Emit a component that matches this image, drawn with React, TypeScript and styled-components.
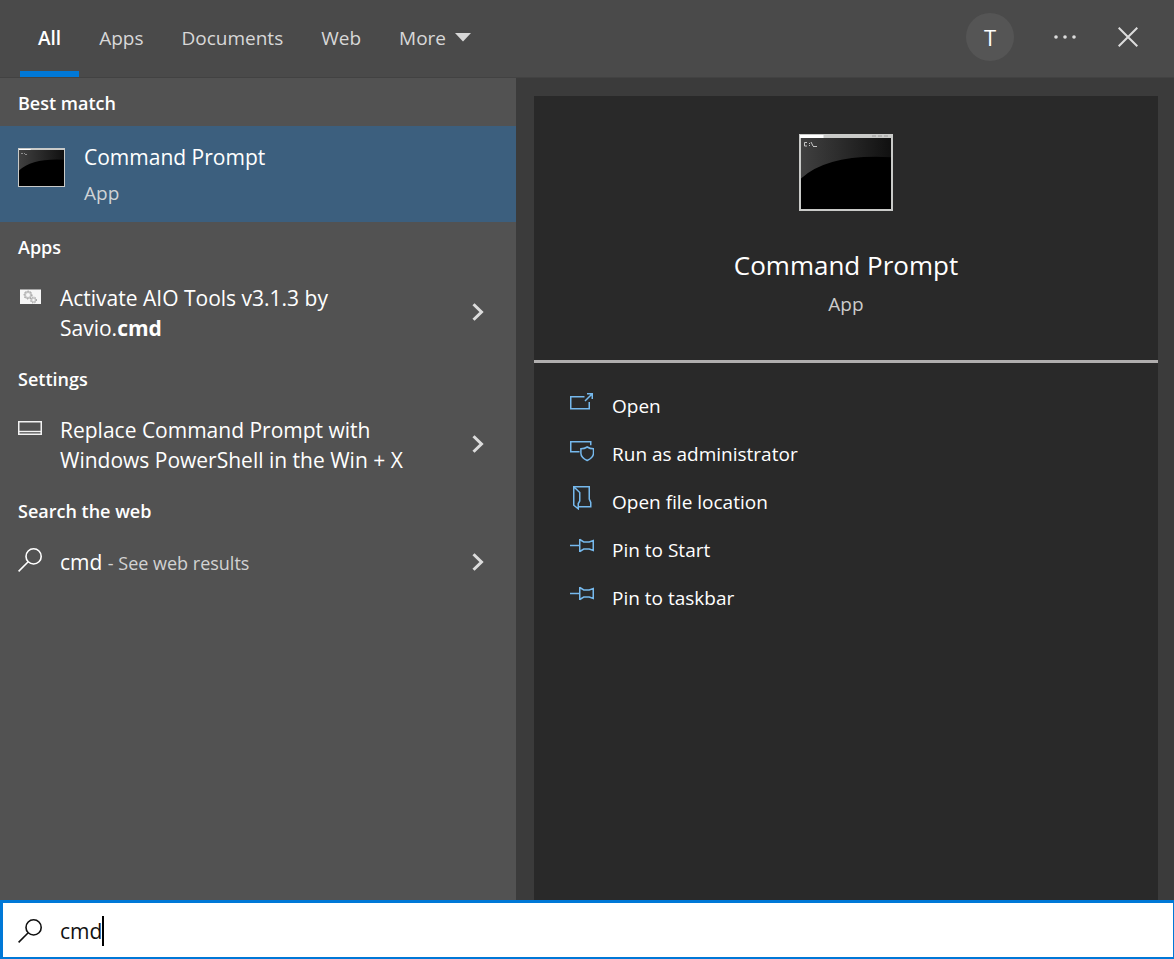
import React, { useState } from "react";
import styled, { createGlobalStyle } from "styled-components";

const GlobalStyle = createGlobalStyle`
  *, *::before, *::after { box-sizing: border-box; }
  body {
    margin: 0;
    background: #3b3b3b;
    color: #ffffff;
    font-family: "Open Sans", "Noto Sans", sans-serif;
  }
  button, input { font: inherit; color: inherit; }
  button { border: 0; background: none; padding: 0; text-align: left; cursor: pointer; }
  h2, h3, p, ul { margin: 0; padding: 0; font-weight: 400; }
  ul { list-style: none; }
  svg { display: block; flex: none; }
`;

const Window = styled.div`
  display: flex;
  flex-direction: column;
  min-height: 100vh;
`;

const Header = styled.header`
  display: flex;
  justify-content: space-between;
  height: 78px;
  padding: 0 24px 0 20px;
  background: #4a4a4a;
  border-bottom: 1px solid #424242;
`;

const Tabs = styled.nav`
  display: flex;
  gap: 2px;
`;

const Tab = styled.button<{ $active?: boolean }>`
  display: flex;
  align-items: center;
  gap: 9px;
  padding: 4px 18px 0;
  border-bottom: 6px solid ${(p) => (p.$active ? "#0078d7" : "transparent")};
  color: ${(p) => (p.$active ? "#ffffff" : "#d8d8d8")};
  font-size: 19px;
  font-weight: ${(p) => (p.$active ? 600 : 400)};
`;

const HeaderActions = styled.div`
  display: flex;
  align-items: center;
  padding-bottom: 3px;
  gap: 19px;
`;

const Avatar = styled.button`
  width: 48px;
  height: 48px;
  margin-right: 10px;
  border-radius: 50%;
  background: #555555;
  font-size: 22px;
  text-align: center;
`;

const IconButton = styled.button`
  display: grid;
  place-items: center;
  width: 44px;
  height: 44px;
  color: #dcdcdc;
`;

const Body = styled.main`
  display: flex;
  flex: 1;
`;

const Results = styled.section`
  flex: 0 1 516px;
  background: #525252;
`;

const GroupTitle = styled.h3`
  padding: 12px 18px 10px;
  font-size: 18px;
  line-height: 26px;
  font-weight: 600;
`;

const BestMatch = styled.button`
  display: flex;
  gap: 19px;
  width: 100%;
  height: 96px;
  padding: 16px 18px;
  background: #3c5f7e;
`;

const BestIcon = styled.span`
  padding-top: 6px;
`;

const BestName = styled.span`
  display: block;
  font-size: 21px;
  line-height: 30px;
`;

const Kind = styled.span`
  display: block;
  padding-top: 8px;
  color: #cfd3d6;
  font-size: 19px;
  line-height: 26px;
`;

const ResultRow = styled.button`
  display: flex;
  align-items: center;
  gap: 18px;
  width: 100%;
  padding: 13px 32px 11px 18px;
`;

const ResultIcon = styled.span`
  display: flex;
  justify-content: center;
  align-items: center;
  align-self: flex-start;
  width: 24px;
  height: 26px;
`;

const ResultText = styled.span`
  flex: 1;
  max-width: 370px;
  margin-right: auto;
  font-size: 21px;
  line-height: 30px;
`;

const Match = styled.b`
  font-weight: 700;
`;

const Hint = styled.span`
  color: #d2d2d2;
  font-size: 18px;
`;

const Detail = styled.section`
  display: flex;
  flex: 1;
  padding: 18px 16px 0 18px;
  background: #3b3b3b;
`;

const Card = styled.div`
  flex: 1;
  background: #292929;
`;

const Hero = styled.div`
  display: flex;
  flex-direction: column;
  align-items: center;
  height: 267px;
  padding-top: 38px;
  border-bottom: 3px solid #b0aeae;
`;

const HeroName = styled.h2`
  margin-top: 35px;
  font-size: 26px;
  line-height: 38px;
`;

const HeroKind = styled.p`
  margin-top: 7px;
  color: #cccccc;
  font-size: 19px;
  line-height: 26px;
`;

const Actions = styled.ul`
  padding: 19px 36px;
`;

const Action = styled.button`
  display: flex;
  align-items: center;
  gap: 18px;
  width: 100%;
  height: 48px;
  font-size: 19px;
  line-height: 26px;
`;

const ActionIcon = styled.span`
  padding-bottom: 8px;
  color: #76b9ed;
`;

const SearchBar = styled.label`
  display: flex;
  align-items: center;
  height: 59px;
  padding: 2px 0 0 15px;
  border: solid #0078d7;
  border-width: 3px 1px 2px 3px;
  background: #ffffff;
  color: #111111;
  cursor: text;
`;

const SearchInput = styled.input`
  field-sizing: content;
  margin-left: 18px;
  padding: 0;
  border: 0;
  outline: 0;
  background: transparent;
  caret-color: transparent;
  font-size: 21px;
  line-height: 30px;
`;

const Caret = styled.span`
  width: 2px;
  height: 30px;
  background: #000000;
`;

function ConsoleIcon({ width, height, prompt, id }: { width: number; height: number; prompt: boolean; id: string }) {
  const bar = prompt ? 4 : 2;
  const edge = prompt ? 2 : 1;
  const w = width - edge * 2;
  const h = height - bar - edge;
  return (
    <svg width={width} height={height} aria-hidden="true">
      <defs>
        <linearGradient id={id} x1="0" y1="0" x2="1" y2="0">
          <stop offset="0" stopColor="#404040" />
          <stop offset="0.45" stopColor="#2b2b2b" />
          <stop offset="1" stopColor="#101010" />
        </linearGradient>
      </defs>
      <rect width={width} height={height} fill="#c9cac8" />
      <rect x="1" y="1" width={width * 0.25} height={bar - 1} fill="#ffffff" />
      {prompt && <path d="M73 2h4M79 2h4M85 2h4" stroke="#9a9a9a" />}
      <rect x={edge} y={bar} width={w} height={h} fill="#000000" />
      <path
        d={`M${edge} ${bar}h${w}v${h * 0.27}Q${edge + w * 0.3} ${bar + h * 0.22} ${edge} ${bar + h * 0.57}z`}
        fill={`url(#${id})`}
      />
      {prompt ? (
        <path d="M8 8.500h-2.500v3.500h2.500M10.500 9v1M10.500 11v1M12 8l2 4M14 12.500h4" fill="none" stroke="#c4c4c4" />
      ) : (
        <path d="M3 5.500h2M6 5.500h1M7 6.500h2" stroke="#8c8c8c" />
      )}
    </svg>
  );
}

const SearchIcon = () => (
  <svg width="24" height="24" fill="none" stroke="currentColor" strokeWidth="1.600" aria-hidden="true">
    <circle cx="15.600" cy="8.400" r="7.600" />
    <path d="M10.200 13.800L.6 23.400" />
  </svg>
);

const ChevronIcon = () => (
  <svg width="12" height="20" fill="none" stroke="#dcdcdc" strokeWidth="3" aria-hidden="true">
    <path d="M1.500 1.200L9.500 9L1.500 16.800" />
  </svg>
);

const ScriptIcon = () => (
  <svg width="21" height="15" aria-hidden="true">
    <rect width="21" height="15" fill="#f6f6f6" />
    <path d="M0 .5h21" stroke="#a5a5a5" />
    <circle cx="8" cy="6" r="3" fill="none" stroke="#c4c4c4" strokeWidth="2" />
    <circle cx="8" cy="6" r="4" fill="none" stroke="#8d8d8d" strokeDasharray="1 2" />
    <circle cx="13.500" cy="11" r="2" fill="none" stroke="#c4c4c4" strokeWidth="1.500" />
    <circle cx="13.500" cy="11" r="3" fill="none" stroke="#8d8d8d" strokeDasharray="1 1.500" />
  </svg>
);

const TaskbarIcon = () => (
  <svg width="24" height="14" fill="none" stroke="#f2f2f2" aria-hidden="true">
    <rect x=".75" y=".75" width="22.500" height="12.500" strokeWidth="1.500" />
    <path d="M1 10.500h22" strokeWidth="1.400" />
  </svg>
);

const ActionSvg = ({ children }: { children: React.ReactNode }) => (
  <svg width="24" height="24" fill="none" stroke="currentColor" strokeWidth="1.500" aria-hidden="true">
    {children}
  </svg>
);

const OpenIcon = () => (
  <ActionSvg>
    <path d="M14.500 6.750H.75v12h18.500V12" />
    <path d="M15 11L22 4M17 3.750h5.250V9" />
  </ActionSvg>
);

const AdminIcon = () => (
  <ActionSvg>
    <path d="M9.500 13.750H.75V3.750h20v3.500" />
    <path d="M17.200 9c-2 1.300-4 1.800-6.300 1.800v4.400c0 3.500 2.600 5.500 6.300 7.300 3.700-1.800 6.300-3.800 6.300-7.300v-4.400c-2.300 0-4.300-.5-6.300-1.800z" />
  </ActionSvg>
);

const FolderIcon = () => (
  <ActionSvg>
    <path d="M4 .75h15.250V13l1.500 3.500v4.250H8.500" />
    <path d="M3.750 .75v18.500l4.500 3.500V17.500l1.500-2.500V6.500z" />
  </ActionSvg>
);

const PinIcon = () => (
  <ActionSvg>
    <path d="M0 11.500h9.500M9.750 5v13M9.750 5.500l4 2.500h5.500l4-1.500v10l-4-1.500h-5.500l-4 2.500" />
  </ActionSvg>
);

const actions = [
  { label: "Open", Icon: OpenIcon },
  { label: "Run as administrator", Icon: AdminIcon },
  { label: "Open file location", Icon: FolderIcon },
  { label: "Pin to Start", Icon: PinIcon },
  { label: "Pin to taskbar", Icon: PinIcon },
];

export default function App() {
  const [query, setQuery] = useState("cmd");

  return (
    <Window>
      <GlobalStyle />
      <Header>
        <Tabs>
          <Tab $active>All</Tab>
          <Tab>Apps</Tab>
          <Tab>Documents</Tab>
          <Tab>Web</Tab>
          <Tab>
            More
            <svg width="16" height="9" aria-hidden="true">
              <path d="M0 0h16L8 8.500z" fill="#d8d8d8" />
            </svg>
          </Tab>
        </Tabs>
        <HeaderActions>
          <Avatar>T</Avatar>
          <IconButton aria-label="Options">
            <svg width="24" height="4" fill="#dcdcdc" aria-hidden="true">
              <circle cx="3" cy="2" r="1.800" />
              <circle cx="12" cy="2" r="1.800" />
              <circle cx="21" cy="2" r="1.800" />
            </svg>
          </IconButton>
          <IconButton aria-label="Close">
            <svg width="20" height="20" stroke="#dcdcdc" strokeWidth="2" aria-hidden="true">
              <path d="M.7 .7l18.600 18.600M19.300 .7L.7 19.300" />
            </svg>
          </IconButton>
        </HeaderActions>
      </Header>

      <Body>
        <Results>
          <GroupTitle>Best match</GroupTitle>
          <BestMatch>
            <BestIcon>
              <ConsoleIcon width={47} height={39} prompt={false} id="console-small" />
            </BestIcon>
            <span>
              <BestName>Command Prompt</BestName>
              <Kind>App</Kind>
            </span>
          </BestMatch>

          <GroupTitle>Apps</GroupTitle>
          <ResultRow>
            <ResultIcon>
              <ScriptIcon />
            </ResultIcon>
            <ResultText>
              Activate AIO Tools v3.1.3 by Savio.<Match>cmd</Match>
            </ResultText>
            <ChevronIcon />
          </ResultRow>

          <GroupTitle>Settings</GroupTitle>
          <ResultRow>
            <ResultIcon>
              <TaskbarIcon />
            </ResultIcon>
            <ResultText>Replace Command Prompt with Windows PowerShell in the Win + X</ResultText>
            <ChevronIcon />
          </ResultRow>

          <GroupTitle>Search the web</GroupTitle>
          <ResultRow>
            <ResultIcon>
              <SearchIcon />
            </ResultIcon>
            <ResultText>
              cmd <Hint>- See web results</Hint>
            </ResultText>
            <ChevronIcon />
          </ResultRow>
        </Results>

        <Detail>
          <Card>
            <Hero>
              <ConsoleIcon width={94} height={77} prompt id="console-large" />
              <HeroName>Command Prompt</HeroName>
              <HeroKind>App</HeroKind>
            </Hero>
            <Actions>
              {actions.map(({ label, Icon }) => (
                <li key={label}>
                  <Action>
                    <ActionIcon>
                      <Icon />
                    </ActionIcon>
                    {label}
                  </Action>
                </li>
              ))}
            </Actions>
          </Card>
        </Detail>
      </Body>

      <SearchBar>
        <SearchIcon />
        <SearchInput aria-label="Search" value={query} onChange={(e) => setQuery(e.target.value)} />
        <Caret />
      </SearchBar>
    </Window>
  );
}
